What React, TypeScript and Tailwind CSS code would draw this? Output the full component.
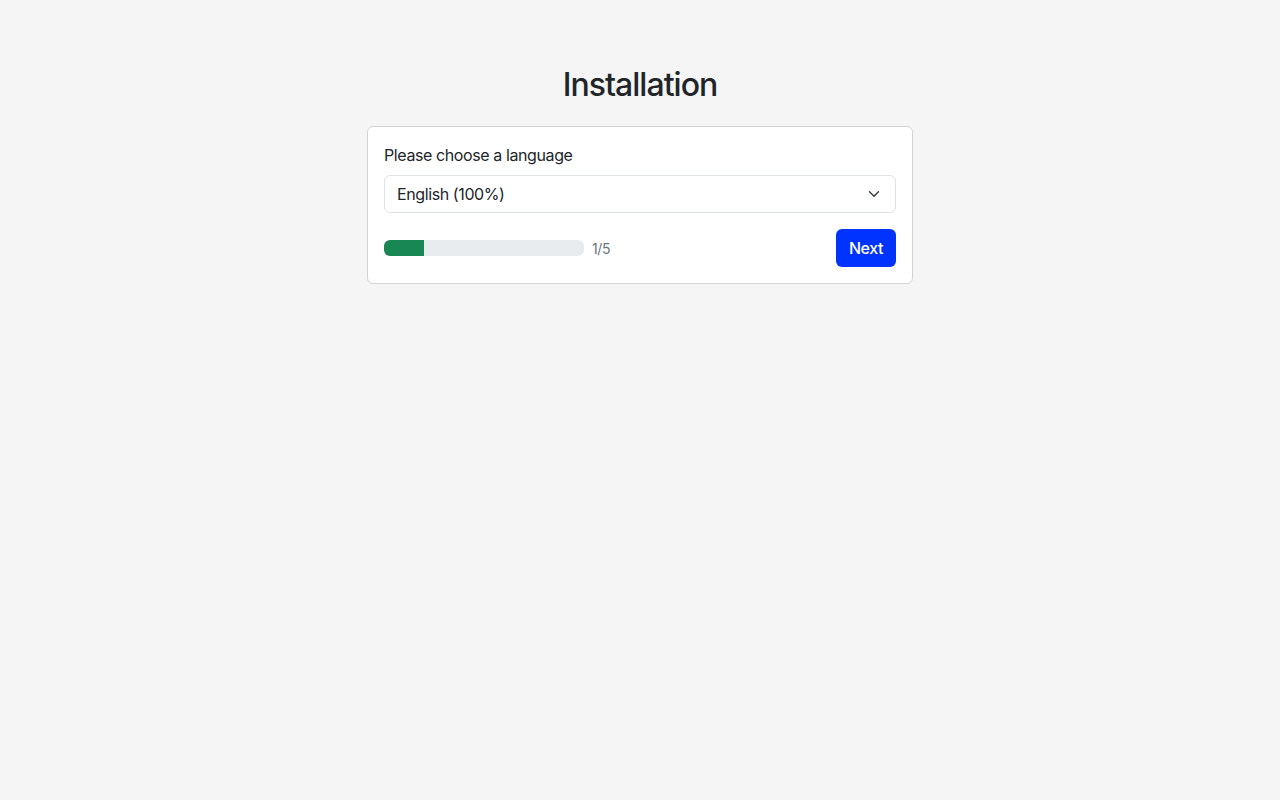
import React from "react";

export default function App() {
  return (
    <div
      className="min-h-screen w-full bg-[#f5f5f5] text-[#212529] tracking-[-0.025em]"
      style={{ fontFamily: "Inter, 'Noto Sans', sans-serif" }}
    >
      <div className="flex flex-col items-center pt-[66px]">
        <h1 className="text-[32px] leading-[1.2] font-medium mb-[22px] text-[#212529] tracking-[-0.03em]">
          Installation
        </h1>
        <div className="w-[546px] bg-white border border-[#d3d3d3] rounded-[6px] p-4">
          <div className="text-[16px] leading-6 mb-2">Please choose a language</div>
          <div className="relative h-[38px] w-full border border-[#dee2e6] rounded-[6px] flex items-center px-3 text-[16px] leading-6">
            <span>English (100%)</span>
            <svg
              className="absolute right-[15px] top-1/2 -translate-y-1/2"
              width="12"
              height="12"
              viewBox="0 0 16 16"
              fill="none"
              stroke="#343a40"
              strokeWidth="1.8"
              strokeLinecap="round"
              strokeLinejoin="round"
            >
              <path d="M2 5l6 6 6-6" />
            </svg>
          </div>
          <div className="mt-4 flex items-center justify-between">
            <div className="flex items-center">
              <div className="w-[200px] h-4 rounded-[6px] bg-[#e9ecef] overflow-hidden">
                <div className="h-full bg-[#198754]" style={{ width: "20%" }} />
              </div>
              <span className="ml-2 text-[14px] text-[#6c757d]">1/5</span>
            </div>
            <button className="h-[38px] w-[60px] rounded-[6px] bg-[#0033ff] text-white text-[16px] leading-6 font-medium">
              Next
            </button>
          </div>
        </div>
      </div>
    </div>
  );
}
